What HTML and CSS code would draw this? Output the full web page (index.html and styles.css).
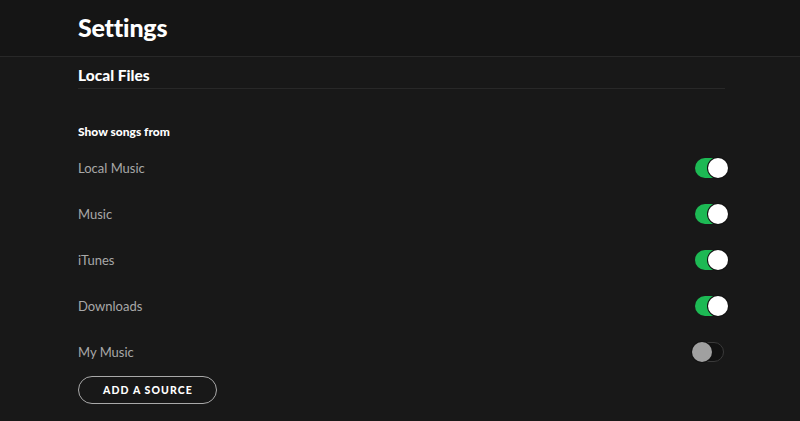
FILE: index.html
```html
<!DOCTYPE html>
<html>
<head>
<meta charset="utf-8">
<link rel="stylesheet" href="styles.css">
</head>
<body>
<header class="topbar">
  <h1 class="title">Settings</h1>
</header>
<main class="content">
  <section class="section">
    <h2 class="section-title">Local Files</h2>
    <h3 class="group-title">Show songs from</h3>
    <ul class="rows">
      <li class="row"><span class="label">Local Music</span><span class="toggle on"><span class="knob"></span></span></li>
      <li class="row"><span class="label">Music</span><span class="toggle on"><span class="knob"></span></span></li>
      <li class="row"><span class="label">iTunes</span><span class="toggle on"><span class="knob"></span></span></li>
      <li class="row"><span class="label">Downloads</span><span class="toggle on"><span class="knob"></span></span></li>
      <li class="row"><span class="label">My Music</span><span class="toggle off"><span class="knob"></span></span></li>
    </ul>
    <button class="btn">ADD A SOURCE</button>
  </section>
</main>
</body>
</html>
```
FILE: styles.css
```css
* { box-sizing: border-box; }
html, body { margin: 0; padding: 0; }
body {
  background: #181818;
  font-family: Lato, "Liberation Sans", sans-serif;
  color: #fff;
  width: 800px;
  height: 421px;
  overflow: hidden;
}
.topbar {
  height: 57px;
  background: #151515;
  border-bottom: 1px solid #282828;
  padding: 12px 0 0 78px;
}
.title {
  margin: 0;
  font-size: 25px;
  font-weight: 900;
  line-height: 30px;
  letter-spacing: -0.2px;
}
.content {
  padding: 0 72px 0 78px;
}
.section-title {
  margin: 0;
  padding-top: 8px;
  height: 32px;
  font-size: 15.5px;
  font-weight: 900;
  line-height: 20px;
  border-bottom: 1px solid #282828;
  width: 647px;
}
.group-title {
  margin: 35px 0 0;
  font-size: 12px;
  font-weight: 900;
  line-height: 16px;
}
.rows {
  list-style: none;
  margin: 5px 0 0;
  padding: 0;
}
.row {
  height: 46px;
  display: flex;
  align-items: center;
  justify-content: space-between;
}
.label {
  font-size: 13px;
  color: #a8a8a8;
  padding-bottom: 1px;
}
.toggle {
  position: relative;
  width: 33px;
  height: 20px;
  border-radius: 10px;
  display: block;
}
.toggle.on {
  background: #1db954;
}
.toggle.on .knob {
  position: absolute;
  right: 0;
  top: 0;
  width: 20px;
  height: 20px;
  border-radius: 50%;
  background: #fff;
  box-shadow: 0 0 0 1px #121212;
}
.toggle.off {
  background: #121212;
  border: 1px solid #3a3a3a;
  margin-right: 4px;
  width: 32px;
}
.toggle.off .knob {
  position: absolute;
  left: -1px;
  top: -1px;
  width: 20px;
  height: 20px;
  border-radius: 50%;
  background: #a0a0a0;
  box-shadow: 0 0 0 1px #121212;
}
.btn {
  margin-top: 1px;
  width: 139px;
  height: 28px;
  background: transparent;
  border: 1px solid #a9a9a9;
  border-radius: 14px;
  color: #fff;
  font-family: Lato, "Liberation Sans", sans-serif;
  font-size: 10.5px;
  font-weight: 900;
  letter-spacing: 1.1px;
  padding: 0 0 0 1px;
  text-align: center;
  cursor: pointer;
}
```
